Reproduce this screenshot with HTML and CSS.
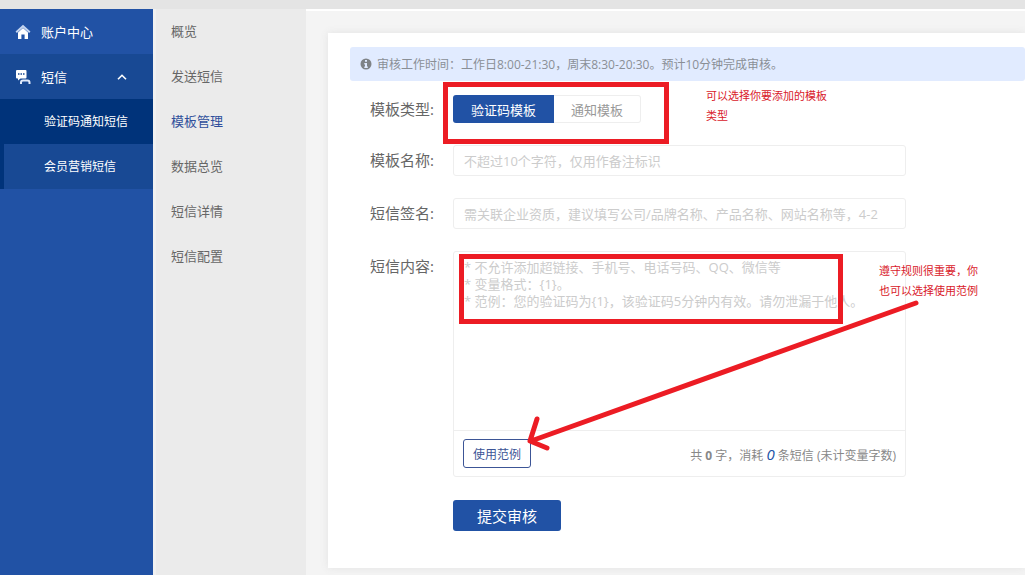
FILE: index.html
```html
<!DOCTYPE html>
<html lang="zh-CN">
  <head>
    <meta charset="UTF-8">
    <meta name="viewport" content="width=device-width, initial-scale=1.0">
    <title>模板管理</title>
    <link rel="stylesheet" href="styles.css">
  </head>
  <body>
    <div class="topbar"></div>
    <div class="layout">
      <nav class="sidebar">
        <a href="#" class="side-item">
          <svg class="side-icon" viewBox="0 0 16 16">
            <path d="M1.2 8.2 8 2.2l6.8 6" fill="none" stroke="#c3d4f0" stroke-width="2"/>
            <path d="M3 8.4 8 4l5 4.4V15H9.600v-4.500H6.400V15H3z" fill="#fff"/>
          </svg>
          账户中心
        </a>
        <a href="#" class="side-item open">
          <svg class="side-icon" viewBox="0 0 16 16">
            <path d="M2 1h8.500a1 1 0 0 1 1 1v6.500a1 1 0 0 1-1 1H5.500L3 11.500v-2H2a1 1 0 0 1-1-1V2a1 1 0 0 1 1-1z" fill="#fff"/>
            <path d="M3 5h1.500M5.500 5H7M8 5h1.500" stroke="#184994" stroke-width="1.500"/>
            <path d="M6 15v-1.500a2 2 0 0 1 2-2h4.500a2 2 0 0 1 2 2V15" fill="none" stroke="#dfe9fa" stroke-width="2"/>
          </svg>
          短信
          <svg class="side-arrow" viewBox="0 0 10 6">
            <path d="M1 5.300 5 1.300l4 4" fill="none" stroke="#fff" stroke-width="1.600"/>
          </svg>
        </a>
        <a href="#" class="side-sub active">验证码通知短信</a>
        <a href="#" class="side-sub">会员营销短信</a>
      </nav>

      <nav class="subnav">
        <a href="#">概览</a>
        <a href="#">发送短信</a>
        <a href="#" class="current">模板管理</a>
        <a href="#">数据总览</a>
        <a href="#">短信详情</a>
        <a href="#">短信配置</a>
      </nav>

      <main class="content">
        <div class="card">
          <div class="notice">
            <svg class="notice-icon" viewBox="0 0 12 12">
              <circle cx="6" cy="6" r="5.500" fill="#7f8387"/>
              <path d="M5 2h2v1.800H5zM4.300 5H7v3.500h.8V10H4.300V8.500H5v-2h-.7z" fill="#e1ebff"/>
            </svg>
            审核工作时间：工作日8:00-21:30，周末8:30-20:30。预计10分钟完成审核。
          </div>
          <form class="template-form">
            <div class="row">
              <span class="label" id="type-label">模板类型:</span>
              <div class="segment" role="group" aria-labelledby="type-label">
                <button type="button" class="seg-btn on">验证码模板</button>
                <button type="button" class="seg-btn">通知模板</button>
              </div>
            </div>
            <div class="row">
              <label class="label" for="name">模板名称:</label>
              <input class="field" type="text" id="name" placeholder="不超过10个字符，仅用作备注标识">
            </div>
            <div class="row">
              <label class="label" for="sign">短信签名:</label>
              <input class="field" type="text" id="sign" placeholder="需关联企业资质，建议填写公司/品牌名称、产品名称、网站名称等，4-2">
            </div>
            <div class="row">
              <label class="label" for="message">短信内容:</label>
              <div class="editor">
                <textarea id="message" placeholder="* 不允许添加超链接、手机号、电话号码、QQ、微信等&#10;* 变量格式：{1}。&#10;* 范例：您的验证码为{1}，该验证码5分钟内有效。请勿泄漏于他人。"></textarea>
                <div class="editor-foot">
                  <button type="button" class="example-btn">使用范例</button>
                  <span class="count">共 <b>0</b> 字，消耗 <em>0</em> 条短信 (未计变量字数)</span>
                </div>
              </div>
            </div>
            <button type="submit" class="submit-btn">提交审核</button>
          </form>

          <!-- red guide marks over the form -->
          <div class="mark mark-type"></div>
          <div class="mark mark-rules"></div>
          <p class="tip tip-type">可以选择你要添加的模板类型</p>
          <p class="tip tip-rules">遵守规则很重要，你也可以选择使用范例</p>
          <svg class="mark-arrow" viewBox="0 0 396 154">
            <path d="M391 5 6 143M12 121 5 143l17 7" fill="none" stroke="#ec1c24" stroke-width="5" stroke-linecap="round" stroke-linejoin="round"/>
          </svg>
        </div>
      </main>
    </div>
  </body>
</html>
```
FILE: styles.css
```css
* {
    box-sizing: border-box;
}
body {
    margin: 0;
    min-height: 100vh;
    display: flex;
    flex-direction: column;
    overflow-x: hidden;
    background-color: #f4f4f4;
    font-family: "Open Sans", "Noto Sans CJK SC", sans-serif;
    font-size: 13px;
    color: #666;
}
a {
    text-decoration: none;
}
button, input, textarea {
    font-family: inherit;
    font-size: 13px;
}
button {
    padding: 0;
    cursor: pointer;
}
.topbar {
    height: 9px;
    background-color: #e4e4e4;
}
.layout {
    flex: 1;
    display: flex;
}

/* left menus */
.sidebar {
    width: 153px;
    flex-shrink: 0;
    background-color: #2152a5;
}
.side-item {
    display: flex;
    align-items: center;
    height: 45px;
    padding: 0 26px 0 15px;
    color: #fff;
}
.side-item.open {
    background-color: #184994;
}
.side-icon {
    width: 16px;
    height: 16px;
    margin-right: 10px;
}
.side-arrow {
    width: 10px;
    height: 6px;
    margin-left: auto;
}
.side-sub {
    display: block;
    padding-left: 40px;
    border-left: 4px solid #00337a;
    background-color: #184994;
    color: #fff;
    font-size: 12px;
    line-height: 45px;
}
.side-sub.active {
    background-color: #00337a;
}
.subnav {
    width: 153px;
    flex-shrink: 0;
    padding-left: 15px;
    border-left: 3px solid #f1f1f1;
    background-color: #ebebeb;
}
.subnav a {
    display: block;
    color: #666;
    line-height: 45px;
}
.subnav a.current {
    color: #2f4f9b;
}

/* form card */
.content {
    flex: 1;
    min-width: 0;
    padding: 22px 0 7px 22px;
    border-top: 2px solid #fff;
}
.card {
    position: relative;
    padding: 14px 0 37px 22px;
    background-color: #fff;
    box-shadow: 0 0 8px #e2e2e2;
}
.notice {
    display: flex;
    align-items: center;
    height: 34px;
    margin-bottom: 14px;
    padding-left: 10px;
    border-radius: 3px;
    background-color: #e1ebff;
    color: #8a8f96;
    font-size: 12px;
}
.notice-icon {
    width: 12px;
    height: 12px;
    margin-right: 5px;
}
.template-form {
    padding-left: 20px;
}
.row {
    display: flex;
    margin-bottom: 22px;
}
.label {
    width: 83px;
    flex-shrink: 0;
    font-size: 15px;
    line-height: 31px;
}
.segment {
    display: flex;
    height: 28px;
}
.segment, .row:first-child .label {
    line-height: 28px;
}
.seg-btn {
    width: 87px;
    border: 1px solid #eee;
    border-left: 0;
    border-radius: 0 3px 3px 0;
    background-color: #fff;
    color: #999;
}
.seg-btn.on {
    width: 101px;
    border: 0;
    border-radius: 3px 0 0 3px;
    background-color: #2152a5;
    color: #fff;
}
.field {
    width: 453px;
    height: 31px;
    padding: 0 10px;
    border: 1px solid #eee;
    border-radius: 3px;
}
::placeholder {
    color: #ccc;
}
.editor {
    width: 453px;
    border: 1px solid #eee;
    border-radius: 3px;
}
.editor textarea {
    display: block;
    width: 100%;
    height: 178px;
    padding: 7px 10px;
    border: 0;
    background: none;
    line-height: 17px;
    resize: none;
}
.editor-foot {
    display: flex;
    align-items: center;
    justify-content: space-between;
    height: 46px;
    padding: 0 9px;
    border-top: 1px solid #eee;
    color: #888;
    font-size: 12px;
}
.example-btn {
    width: 68px;
    height: 29px;
    border: 1px solid #3c5596;
    border-radius: 3px;
    background-color: #fff;
    color: #3c5596;
    font-size: 12px;
}
.count em {
    color: #2152a5;
    font-size: 15px;
}
.submit-btn {
    display: block;
    width: 108px;
    height: 31px;
    margin: 23px 0 0 83px;
    border: 0;
    border-radius: 3px;
    background-color: #2152a5;
    color: #fff;
    font-size: 15px;
}

/* guide marks */
.mark, .mark-arrow, .tip {
    position: absolute;
    pointer-events: none;
}
.mark {
    border: 5px solid #ec1c24;
}
.mark-type {
    left: 115px;
    top: 49px;
    width: 226px;
    height: 62px;
}
.mark-rules {
    left: 131px;
    top: 221px;
    width: 384px;
    height: 70px;
}
.mark-arrow {
    left: 197px;
    top: 265px;
    width: 396px;
    height: 154px;
}
.tip {
    margin: 0;
    color: #d9202a;
    font-size: 11px;
    line-height: 20px;
}
.tip-type {
    left: 378px;
    top: 53px;
    width: 124px;
}
.tip-rules {
    left: 551px;
    top: 228px;
    width: 102px;
}
```
